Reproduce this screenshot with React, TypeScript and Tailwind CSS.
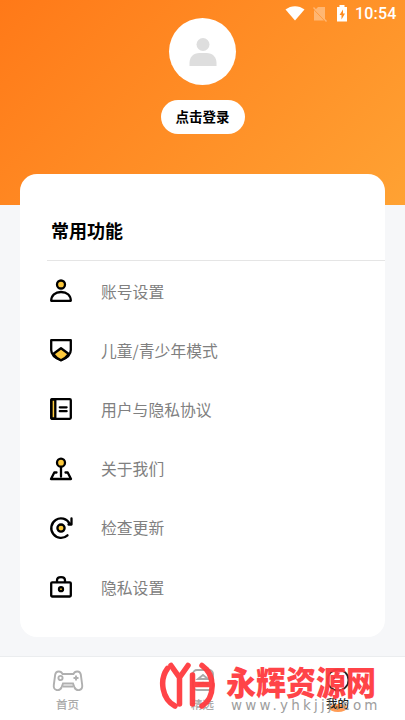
import type { ReactNode } from "react";

const items: { label: string; icon: ReactNode }[] = [
  {
    label: "账号设置",
    icon: (
      <>
        <circle cx="12" cy="5.5" r="4" fill="#fdc93c" />
        <path d="M2.2 21.8c0-5.4 4-8.8 9.8-8.8s9.8 3.4 9.8 8.8z" />
      </>
    ),
  },
  {
    label: "儿童/青少年模式",
    icon: (
      <>
        <path d="M2.2 2.2h19.6V12c0 5-4.6 8.300-9.800 10.300C6.800 20.300 2.200 17 2.200 12z" />
        <path d="M4.2 16 12 10.300l7.800 5.700c-2 2.900-4.500 4.800-7.800 6.300-3.300-1.500-5.800-3.400-7.800-6.300z" fill="#fdc93c" />
      </>
    ),
  },
  {
    label: "用户与隐私协议",
    icon: (
      <>
        <rect x="2.2" y="2.2" width="19.6" height="19.6" rx="1" />
        <path d="M2.500 2.500h3.800v19H2.500z" fill="#fdc93c" />
        <path d="M10.800 10.300h6.800M10.800 14.200h6.800" />
      </>
    ),
  },
  {
    label: "关于我们",
    icon: (
      <>
        <path d="M12 10v9.500M7.500 15.500H5.300L2 22h20l-3.300-6.500h-2.200" />
        <circle cx="12" cy="5.7" r="4" fill="#fdc93c" />
      </>
    ),
  },
  {
    label: "检查更新",
    icon: (
      <>
        <path d="M18.500 19.300A9.700 9.700 0 1 1 20.500 7.500M22.500 2.500v6h-3" />
        <circle cx="12" cy="12.1" r="3.6" fill="#fdc93c" />
      </>
    ),
  },
  {
    label: "隐私设置",
    icon: (
      <>
        <rect x="2.2" y="7.3" width="19.6" height="14.2" rx="1" />
        <path d="M8 7V5.500C8 3.500 9.500 2.200 12 2.200s4 1.300 4 3.300V7" />
        <circle cx="12" cy="14.2" r="2" fill="#fdc93c" />
      </>
    ),
  },
];

function StatusBar() {
  return (
    <div className="absolute right-[9px] top-[4px] flex h-5 items-center text-white">
      <svg className="mr-[8px] h-[16px] w-[20px]" viewBox="0 0 20 16" fill="currentColor">
        <path d="M.5 3.500C6-1 14-1 19.500 3.500L10 14.500z" />
      </svg>
      <svg className="mr-[9px] h-[16px] w-[14px] opacity-35" viewBox="0 0 14 16">
        <path d="M5 1h7v13L2 4zM1 4l10 10.500H1z" fill="currentColor" />
        <path d="m.5 1.500 13 14" stroke="currentColor" strokeWidth="1.3" />
      </svg>
      <svg className="mr-[7px] h-[18px] w-[12px]" viewBox="0 0 12 18">
        <path d="M1 2h2.500V0h5v2H11v14.500H1z" fill="currentColor" />
        <path d="M7 4.500 3.500 10h2v4.500L9 8.500H7z" fill="#ff8d22" />
      </svg>
      <span className="w-[41px] whitespace-nowrap font-['Roboto',sans-serif] text-[16px] font-medium leading-5 tracking-[0.2px]">10:54</span>
    </div>
  );
}

function Watermark() {
  return (
    <div className="absolute left-[159px] top-[660px] flex opacity-95">
      <svg className="h-[52px] w-[58px]" viewBox="0 0 58 52" fill="none" stroke="#ff3b3f" strokeWidth="5.5" strokeLinecap="round">
        <path d="M8.500 8.500C0 20 3 39 16 46" />
        <path d="m12 5.500 8.500 12L29 5.500M20.500 17v27" />
        <path d="M33.500 15v29M34 24.500h19" />
        <path d="M43 5.500C57 15 56 38 43 46" />
      </svg>
      <div className="ml-[9px]">
        <div className="h-[38px] origin-center translate-y-[1.5px] scale-y-110 whitespace-nowrap text-[30px] font-black leading-[39px] text-[#ff3b3f]">永辉资源网</div>
        <div className="ml-[5px] h-[14px] whitespace-nowrap font-['DejaVu_Sans',sans-serif] text-[13.5px] leading-[14px] tracking-[3.2px] text-[#999]">www.yhkjjj.com</div>
      </div>
    </div>
  );
}

export default function App() {
  return (
    <div className="relative flex h-[720px] w-[405px] flex-col overflow-hidden bg-[#f6f7f9] font-['Noto_Sans_CJK_SC',sans-serif]">
      <header className="flex h-[205px] shrink-0 flex-col items-center bg-[linear-gradient(135deg,#ff7918_0%,#ffa233_100%)] pt-[18px]">
        <div className="flex size-[67px] items-center justify-center rounded-full bg-white">
          <svg className="size-[30px]" viewBox="0 0 30 30" fill="#dedede">
            <circle cx="15" cy="7.5" r="6.5" />
            <path d="M1.500 29v-3c0-6 4-10 10-10h7c6 0 10 4 10 10v3z" />
          </svg>
        </div>
        <button className="mt-[15px] h-[34px] w-[84px] rounded-full bg-white pb-px text-[13.5px] font-bold text-black">点击登录</button>
      </header>

      <main className="mx-5 -mt-[31px] h-[463px] shrink-0 rounded-[17px] bg-white pt-[35px]">
        <h1 className="ml-[31px] h-[51px] text-[18px] font-bold leading-[42px] text-black">常用功能</h1>
        <div className="ml-[27px] border-t border-[#e5e5e5] pt-px">
          {items.map((item) => (
            <div key={item.label} className="flex h-[59.2px] items-center">
              <svg
                className="-mt-px ml-[2px] size-[24px]"
                viewBox="0 0 24 24"
                fill="none"
                stroke="#000"
                strokeWidth="2.3"
                strokeLinejoin="round"
                strokeLinecap="round"
              >
                {item.icon}
              </svg>
              <span className="ml-[28px] text-[15.8px] leading-6 text-[#808080]">{item.label}</span>
            </div>
          ))}
        </div>
      </main>

      <nav className="mt-auto grid h-[64px] grid-cols-3 border-t border-[#ebedef] bg-white text-[11.5px] font-medium text-[#aaa]">
        <div className="flex flex-col items-center pt-[13px]">
          <svg className="h-[22px] w-[32px]" viewBox="0 0 32 22" fill="none" stroke="#b0b0b0" strokeWidth="1.9">
            <path d="M10.500 4C9 .5 4 .8 3.200 4.500L1.800 15c-.7 6 5.700 6.500 7.700 2.500l1.500-4h10l1.500 4c2 4 8.400 3.500 7.700-2.500L28.800 4.500C28 .8 23 .5 21.500 4zM11 16.500h10" />
            <circle cx="8.5" cy="8" r="2.1" />
            <path d="M24 5.500v5M21.500 8h5" />
          </svg>
          <span className="leading-[24px]">首页</span>
        </div>
        <div className="flex flex-col items-center pt-[11px]">
          <svg className="h-[24px] w-[24px]" viewBox="0 0 24 24" fill="none" stroke="#aaa" strokeWidth="1.9">
            <rect x="2" y="2" width="20" height="20" rx="4" />
            <path d="M7 17c3-3 7-3 10 0M7 11l5-4 5 4z" />
          </svg>
          <span className="leading-[24px]">精选</span>
        </div>
        <div className="relative flex flex-col items-center pt-[11px] text-[#222]">
          <svg className="h-[24px] w-[24px]" viewBox="0 0 24 24" fill="none" stroke="#222" strokeWidth="1.8">
            <circle cx="12" cy="12" r="10.5" />
            <path d="M8 9v2M16 9v2" />
          </svg>
          <div className="absolute top-[47px] h-[8px] w-[18px] rounded-[50%] bg-[#ff9c55]" />
          <span className="relative leading-[23px]">我的</span>
        </div>
      </nav>
      <StatusBar />
      <Watermark />
    </div>
  );
}
